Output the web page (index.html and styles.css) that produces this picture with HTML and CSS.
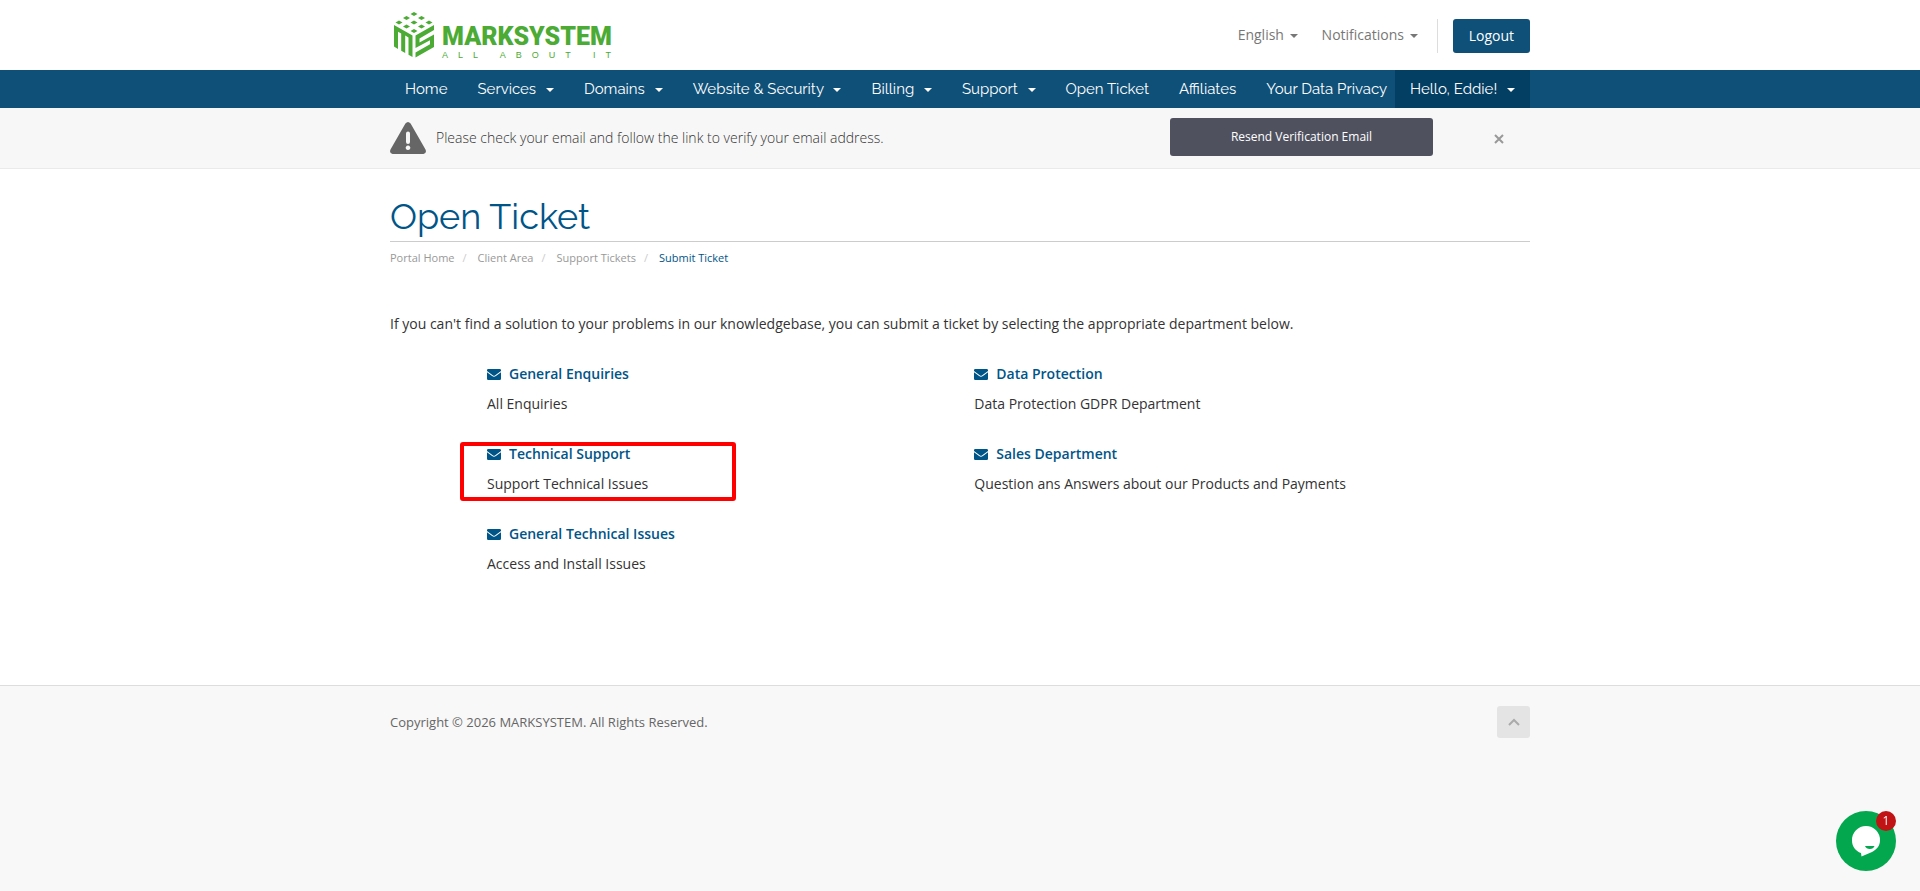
FILE: index.html
```html
<!DOCTYPE html>
<html lang="en">
<head>
<meta charset="UTF-8">
<meta name="viewport" content="width=device-width, initial-scale=1">
<title>Open Ticket - MARKSYSTEM</title>
<link rel="stylesheet" href="styles.css">
</head>
<body>
<svg class="sprite" aria-hidden="true">
	<symbol id="envelope" viewBox="0 0 14 11">
		<path d="M1.3 0h11.4Q14 0 14 1.3v.7L8.300 6.200Q7 7.200 5.700 6.200L0 2v-.7Q0 0 1.300 0z"/>
		<path d="M0 3.300l5.100 3.800q1.900 1.300 3.800 0L14 3.300v6.400Q14 11 12.700 11H1.300Q0 11 0 9.700z"/>
	</symbol>
</svg>

<header id="header">
	<div class="container header-row">
		<a href="#" class="logo">
			<svg class="logo-mark" viewBox="0 0 40 46" aria-hidden="true">
				<path d="M20 0l3.500 2-3.500 2-3.500-2zM12.500 4l3.500 2-3.500 2L9 6zM27.500 4l3.500 2-3.500 2L24 6zM5 8.500l3.500 2-3.500 2-3.500-2zM20 8.500l3.500 2-3.500 2-3.500-2zM35 8.500l3.500 2-3.500 2-3.500-2zM12.500 12.500l3.500 2-3.500 2-3.500-2zM27.500 12.500l3.500 2-3.500 2-3.500-2zM20 17l3.500 2-3.500 2-3.500-2z"/>
				<path d="M0 13l18.500 10.500V45l-4-2.200V25.500l-3.300-1.900V41l-4-2.200V21.500L4 19.700v17.200L0 34.500z"/>
				<path d="M40 13v5L25.500 26.500v4L40 22.500v12.500L21.500 45.500v-5L36 32.300v-4L21.500 36V23.500z"/>
			</svg>
			<span class="logo-text">
				<span class="logo-name">MARKSYSTEM</span>
				<span class="logo-tag">ALL ABOUT IT</span>
			</span>
		</a>
		<div class="top-nav">
			<button type="button" class="top-link">English <span class="caret"></span></button>
			<button type="button" class="top-link">Notifications <span class="caret"></span></button>
			<div class="primary-action"><a href="#" class="btn-logout">Logout</a></div>
		</div>
	</div>
</header>

<nav id="main-menu">
	<div class="container menu-row">
		<ul class="menu">
			<li><a href="#">Home</a></li>
			<li><a href="#">Services <span class="caret"></span></a></li>
			<li><a href="#">Domains <span class="caret"></span></a></li>
			<li><a href="#">Website &amp; Security <span class="caret"></span></a></li>
			<li><a href="#">Billing <span class="caret"></span></a></li>
			<li><a href="#">Support <span class="caret"></span></a></li>
			<li><a href="#">Open Ticket</a></li>
			<li><a href="#">Affiliates</a></li>
			<li><a href="#">Your Data Privacy</a></li>
		</ul>
		<a href="#" class="account">Hello, Eddie! <span class="caret"></span></a>
	</div>
</nav>

<div class="verify">
	<div class="container verify-row">
		<svg class="warning" viewBox="0 0 36 32" aria-hidden="true">
			<path fill-rule="evenodd" d="M15.400 1.500Q18-1.500 20.600 1.500L35.500 27.500Q37 31 33.500 32H2.500Q-1 31 .5 27.500zM16 11.500v8.500q0 2 2 2t2-2v-8.500q0-2-2-2t-2 2zM18 23.500a2.300 2.300 0 1 0 .01 0z"/>
		</svg>
		<p class="verify-text">Please check your email and follow the link to verify your email address.</p>
		<button type="button" class="btn-resend">Resend Verification Email</button>
		<button type="button" class="close" aria-label="Close">
			<svg viewBox="0 0 10 10" aria-hidden="true"><path d="M1 1l8 8M9 1L1 9"/></svg>
		</button>
	</div>
</div>

<main id="main-body">
	<div class="container">
		<h1>Open Ticket</h1>
		<ol class="breadcrumb">
			<li><a href="#">Portal Home</a></li>
			<li><a href="#">Client Area</a></li>
			<li><a href="#">Support Tickets</a></li>
			<li class="active">Submit Ticket</li>
		</ol>

		<p class="intro">If you can't find a solution to your problems in our knowledgebase, you can submit a ticket by selecting the appropriate department below.</p>

		<div class="departments">
			<div class="department">
				<a href="#"><svg class="envelope"><use href="#envelope"/></svg>General Enquiries</a>
				<p>All Enquiries</p>
			</div>
			<div class="department">
				<a href="#"><svg class="envelope"><use href="#envelope"/></svg>Data Protection</a>
				<p>Data Protection GDPR Department</p>
			</div>
			<div class="department marked">
				<a href="#"><svg class="envelope"><use href="#envelope"/></svg>Technical Support</a>
				<p>Support Technical Issues</p>
			</div>
			<div class="department">
				<a href="#"><svg class="envelope"><use href="#envelope"/></svg>Sales Department</a>
				<p>Question ans Answers about our Products and Payments</p>
			</div>
			<div class="department">
				<a href="#"><svg class="envelope"><use href="#envelope"/></svg>General Technical Issues</a>
				<p>Access and Install Issues</p>
			</div>
		</div>
	</div>
</main>

<footer id="footer">
	<div class="container footer-row">
		<p>Copyright © 2026 MARKSYSTEM. All Rights Reserved.</p>
		<a href="#header" class="back-to-top" aria-label="Back to top">
			<svg viewBox="0 0 12 8" aria-hidden="true"><path d="M1 7l5-5 5 5"/></svg>
		</a>
	</div>
</footer>

<button type="button" class="chat" aria-label="Open chat">
	<svg viewBox="0 0 60 60" aria-hidden="true">
		<path class="bubble" d="M30 15a14 14 0 0 1 14 14.500c0 5-3 9-8 11.500-3.500 1.500-7 3-10.500 4.500l-.5-3.500C19.500 40 16 35.500 16 29.500A14 14 0 0 1 30 15z"/>
		<path class="smile" d="M29 35h9.500q-1 3-4.700 3T29 35z"/>
	</svg>
	<span class="badge">1</span>
</button>
</body>
</html>
```

FILE: styles.css
```css
*{
	box-sizing:border-box;
}
body{
	margin:0;
	min-height:100vh;
	display:flex;
	flex-direction:column;
	font-family:"Open Sans", "Noto Sans", sans-serif;
	font-size:14px;
	line-height:20px;
	color:#333;
	background:#F8F8F8;
}
h1,p,ul,ol{
	margin:0;
	padding:0;
}
ul,ol{
	list-style:none;
}
a{
	color:#058;
	text-decoration:none;
}
button{
	font:inherit;
	border:0;
	padding:0;
	background:none;
	cursor:pointer;
}
.sprite{
	display:none;
}
.container{
	width:100%;
	max-width:1170px;
	padding:0 15px;
	margin:0 auto;
}
.caret{
	display:inline-block;
	margin-left:2px;
	vertical-align:middle;
	border-top:4px solid;
	border-right:4px solid transparent;
	border-left:4px solid transparent;
}

#header{
	background:#FFF;
}
.header-row{
	display:flex;
	justify-content:space-between;
	align-items:center;
	height:70px;
}
.logo{
	display:flex;
	align-items:center;
	gap:8px;
	padding-left:4px;
	color:#4BAB34;
}
.logo-mark{
	width:40px;
	height:46px;
	fill:currentColor;
}
.logo-text{
	display:flex;
	flex-direction:column;
	padding-top:14px;
	font-family:Roboto, sans-serif;
}
.logo-name{
	font-size:25px;
	line-height:25px;
	font-weight:900;
}
.logo-tag{
	font-family:"Liberation Sans", sans-serif;
	font-size:9px;
	line-height:12px;
	letter-spacing:10px;
}
.top-nav{
	display:flex;
	align-items:center;
	gap:24px;
}
.top-link{
	color:#777;
}
.primary-action{
	padding-left:15px;
	margin:2px 0 0 -5px;
	border-left:1px solid #DDD;
}
.btn-logout{
	display:block;
	padding:7px 16px;
	border-radius:3px;
	color:#FFF;
	background:#0F5078;
}

#main-menu{
	background:#0F5078;
	font-family:Raleway, Lato, sans-serif;
	font-size:15px;
}
.menu-row,.menu{
	display:flex;
}
.menu-row{
	justify-content:space-between;
}
#main-menu a{
	display:block;
	padding:9px 15px;
	color:#FFF;
	white-space:nowrap;
}
#main-menu li:last-child a{
	padding-right:7px;
}
#main-menu .caret{
	margin-left:6px;
}
#main-menu .account{
	background:#033E63;
}

.verify{
	border-bottom:1px solid #EAEAEA;
	background:#F7F7F7;
}
.verify-row{
	display:flex;
	align-items:center;
	height:60px;
}
.warning{
	width:36px;
	height:32px;
	margin-right:10px;
	fill:#666;
}
.verify-text{
	flex:1;
	font-weight:300;
	color:#333;
}
.btn-resend{
	width:263px;
	height:38px;
	margin-bottom:2px;
	border-radius:3px;
	font-size:12px;
	color:#FFF;
	background:#4F515F;
}
.close{
	width:30px;
	height:30px;
	margin:2px 16px 0 51px;
}
.close svg{
	width:10px;
	height:10px;
	stroke:#999;
	stroke-width:2;
}

#main-body{
	min-height:516px;
	padding:30px 0;
	background:#FFF;
}
h1{
	padding:0 0 8px;
	border-bottom:1px solid #CCC;
	font-family:Raleway, Lato, sans-serif;
	font-size:36px;
	line-height:34px;
	font-weight:400;
	color:#058;
}
.breadcrumb{
	display:flex;
	padding:6px 0;
	font-size:11px;
}
.breadcrumb a{
	color:#999;
}
.breadcrumb li + li:before{
	content:"/";
	padding:0 11px 0 8px;
	color:#CCC;
}
.breadcrumb .active{
	color:#058;
}
.intro{
	margin:40px 0 30px;
}
.departments{
	display:grid;
	grid-template-columns:1fr 1fr;
	row-gap:30px;
	margin:0 6% 0 97px;
}
.department{
	position:relative;
}
.department a{
	display:flex;
	align-items:center;
	gap:8px;
	margin-bottom:10px;
	font-weight:600;
}
.envelope{
	width:14px;
	height:11px;
	fill:#058;
}
.marked:after{
	content:"";
	position:absolute;
	top:-2px;
	left:-27px;
	width:268px;
	height:51px;
	border:4px solid #F00;
	border-radius:3px;
}

#footer{
	flex:1;
	padding:20px 0;
	border-top:1px solid #DDD;
	font-size:13px;
	color:#666;
}
.footer-row{
	display:flex;
	justify-content:space-between;
	align-items:center;
}
.back-to-top{
	display:flex;
	align-items:center;
	justify-content:center;
	width:33px;
	height:32px;
	border-radius:3px;
	background:#E4E4E4;
}
.back-to-top svg{
	width:12px;
	height:8px;
	fill:none;
	stroke:#AAA;
	stroke-width:2;
}

.chat{
	position:fixed;
	right:24px;
	bottom:20px;
	width:60px;
	height:60px;
	border-radius:50%;
	background:#03A84E;
}
.chat svg{
	display:block;
}
.bubble{
	fill:#FFF;
}
.smile{
	fill:#03A84E;
}
.badge{
	position:absolute;
	top:0;
	right:0;
	width:20px;
	border-radius:50%;
	font-size:12px;
	color:#FFF;
	background:#C11215;
}
```
